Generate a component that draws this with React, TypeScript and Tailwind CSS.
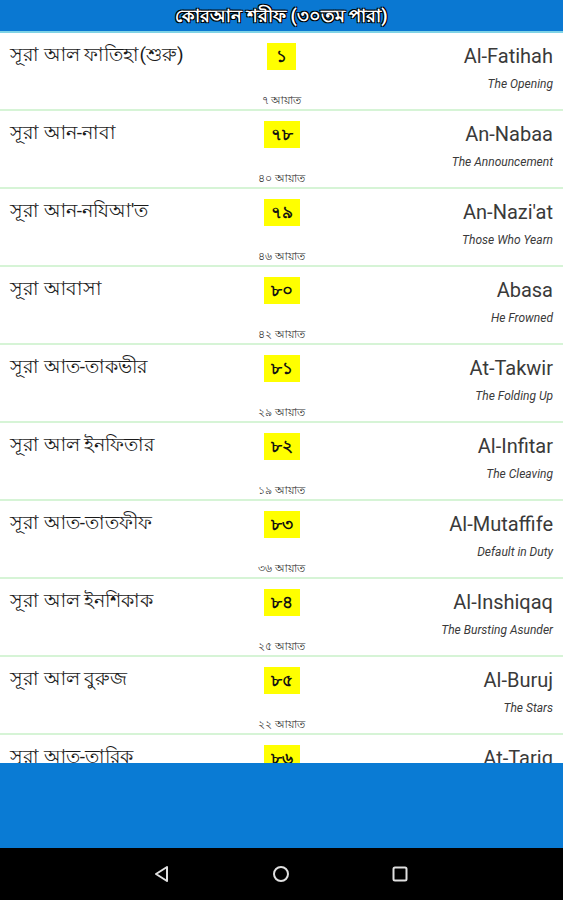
import React from "react";

const rows = [
  { bn: "সূরা আল ফাতিহা(শুরু)", num: "১", en: "Al-Fatihah", mean: "The Opening", ayat: "৭ আয়াত" },
  { bn: "সূরা আন-নাবা", num: "৭৮", en: "An-Nabaa", mean: "The Announcement", ayat: "৪০ আয়াত" },
  { bn: "সূরা আন-নযিআ'ত", num: "৭৯", en: "An-Nazi'at", mean: "Those Who Yearn", ayat: "৪৬ আয়াত" },
  { bn: "সূরা আবাসা", num: "৮০", en: "Abasa", mean: "He Frowned", ayat: "৪২ আয়াত" },
  { bn: "সূরা আত-তাকভীর", num: "৮১", en: "At-Takwir", mean: "The Folding Up", ayat: "২৯ আয়াত" },
  { bn: "সূরা আল ইনফিতার", num: "৮২", en: "Al-Infitar", mean: "The Cleaving", ayat: "১৯ আয়াত" },
  { bn: "সূরা আত-তাতফীফ", num: "৮৩", en: "Al-Mutaffife", mean: "Default in Duty", ayat: "৩৬ আয়াত" },
  { bn: "সূরা আল ইনশিকাক", num: "৮৪", en: "Al-Inshiqaq", mean: "The Bursting Asunder", ayat: "২৫ আয়াত" },
  { bn: "সূরা আল বুরুজ", num: "৮৫", en: "Al-Buruj", mean: "The Stars", ayat: "২২ আয়াত" },
  { bn: "সূরা আত-তারিক", num: "৮৬", en: "At-Tariq", mean: "The Piercing Star", ayat: "১৭ আয়াত" },
];

export default function App() {
  return (
    <div className="w-[563px] h-[900px] flex flex-col bg-white overflow-hidden" style={{ fontFamily: "Roboto, 'Noto Sans', sans-serif" }}>
      <div className="h-[33px] shrink-0 bg-[#0a78d2] border-b-2 border-[#7fd3e6] flex items-center justify-center">
        <span
          className="text-white text-[18px] font-bold leading-none"
          style={{ textShadow: "-1px -1px 0 #000, 1px -1px 0 #000, -1px 1px 0 #000, 1px 1px 0 #000" }}
        >
          কোরআন শরীফ (৩০তম পারা)
        </span>
      </div>
      <div className="h-[730px] shrink-0 overflow-hidden">
        {rows.map((r, i) => (
          <div key={i} className="h-[78px] border-b-2 border-[#d6f4d6] flex flex-col px-[10px]">
            <div className="grid grid-cols-3 pt-[10px]">
              <div className="text-[19px] leading-[26px] text-[#1a1a1a] whitespace-nowrap -mt-[1px]">{r.bn}</div>
              <div className="flex justify-center">
                <div className="h-[27px] min-w-[29px] px-[7px] bg-[#ffff00] flex items-center justify-center text-[17px] font-bold text-[#111] leading-none">
                  {r.num}
                </div>
              </div>
              <div className="flex flex-col items-end">
                <div className="text-[20px] leading-[26px] text-[#3a3a3a] whitespace-nowrap">{r.en}</div>
                <div className="text-[12px] italic leading-[16px] text-[#3a3a3a] mt-[7px] whitespace-nowrap">{r.mean}</div>
              </div>
            </div>
            <div className="text-center text-[11px] leading-[14px] text-[#333] mt-[2px]">{r.ayat}</div>
          </div>
        ))}
      </div>
      <div className="h-[85px] shrink-0 bg-[#0a7bd4]" />
      <div className="flex-1 bg-black flex items-center justify-center">
        <div className="flex items-center gap-[99px] -ml-[1px]">
          <svg width="20" height="20" viewBox="0 0 20 20" fill="none" stroke="#e0e0e0" strokeWidth="2" strokeLinejoin="round">
            <path d="M15 3 L4 10 L15 17 Z" />
          </svg>
          <svg width="20" height="20" viewBox="0 0 20 20" fill="none" stroke="#e0e0e0" strokeWidth="2">
            <circle cx="10" cy="10" r="7" />
          </svg>
          <svg width="20" height="20" viewBox="0 0 20 20" fill="none" stroke="#e0e0e0" strokeWidth="2">
            <rect x="3.5" y="3.5" width="13" height="13" rx="1.5" />
          </svg>
        </div>
      </div>
    </div>
  );
}
